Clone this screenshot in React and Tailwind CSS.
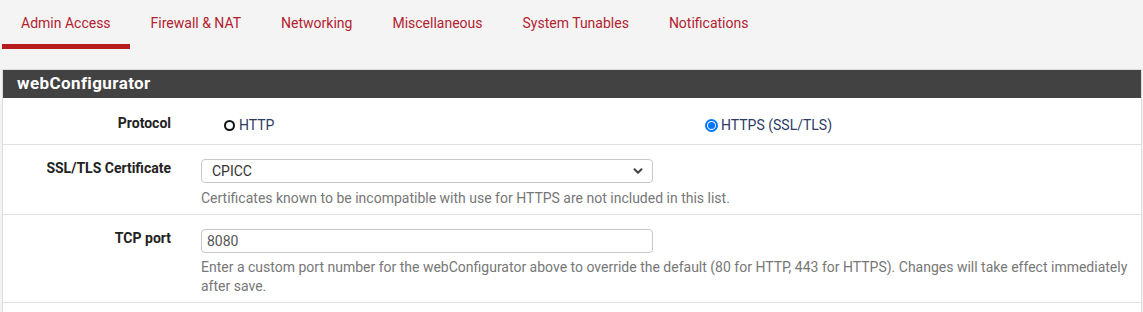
import { ChevronDown } from 'lucide-react'

const tabs = ['Admin Access', 'Firewall & NAT', 'Networking', 'Miscellaneous', 'System Tunables', 'Notifications']

function Radio({ checked, label }) {
  return (
    <label className="flex items-center gap-[3px] text-[14px] leading-5 text-[#2d3a63]">
      {checked ? (
        <span className="flex h-[13px] w-[13px] items-center justify-center rounded-full border-2 border-[#0075ff] bg-white">
          <span className="h-[7px] w-[7px] rounded-full bg-[#0075ff]"></span>
        </span>
      ) : (
        <span className="ml-[1px] mr-[1px] h-[11px] w-[11px] rounded-full border-[2.5px] border-[#111]"></span>
      )}
      {label}
    </label>
  )
}

export default function App() {
  return (
    <div className="min-h-screen bg-[#f4f4f4] font-['Roboto',sans-serif]">
      {/* Tabs */}
      <nav className="ml-[2px] flex gap-[2px]">
        {tabs.map((tab, i) => (
          <a
            key={tab}
            className={
              'px-[19px] pt-[13px] pb-[11px] text-[14px] leading-5 text-[#b3212f] ' +
              (i === 0 ? 'border-b-[5px] border-[#b71c1c]' : 'border-b-[5px] border-transparent')
            }
          >
            {tab}
          </a>
        ))}
      </nav>

      {/* Panel */}
      <div className="ml-[2px] mt-[20px] w-[1140px] border border-t-[#dcdcdc] border-x-[#dcdcdc] border-b-0 bg-white">
        <div className="bg-[#424242] px-[14px] h-[28px] flex items-center text-[17px] font-bold tracking-[0.4px] text-white">
          webConfigurator
        </div>

        {/* Protocol */}
        <div className="grid grid-cols-[198px_1fr] border-b border-[#e0e0e0]">
          <div className="pr-[30px] pt-[15px] pb-[11px] text-right text-[14px] font-bold leading-5 text-[#222]">Protocol</div>
          <div className="grid grid-cols-[482px_1fr] pt-[17px]">
            <div className="pl-[22px]">
              <Radio label="HTTP" />
            </div>
            <div className="pl-[22px]">
              <Radio checked label="HTTPS (SSL/TLS)" />
            </div>
          </div>
        </div>

        {/* Certificate */}
        <div className="grid grid-cols-[198px_1fr] border-b border-[#e0e0e0]">
          <div className="pr-[30px] pt-[13px] text-right text-[14px] font-bold leading-5 text-[#222]">SSL/TLS Certificate</div>
          <div className="pr-[4px] pt-[14px] pb-[6px]">
            <div className="flex h-[24px] w-[452px] items-center justify-between rounded-[4px] border border-[#c8c8c8] pl-[10px] pr-[7px] text-[14px] text-[#333]">
              <span>CPICC</span>
              <ChevronDown className="h-[14px] w-[14px] text-[#444]" strokeWidth={3.5} />
            </div>
            <p className="mt-[5px] text-[14px] leading-5 text-[#777]">
              Certificates known to be incompatible with use for HTTPS are not included in this list.
            </p>
          </div>
        </div>

        {/* TCP port */}
        <div className="grid grid-cols-[198px_1fr] border-b border-[#e0e0e0]">
          <div className="pr-[30px] pt-[13px] text-right text-[14px] font-bold leading-5 text-[#222]">TCP port</div>
          <div className="pr-[4px] pt-[14px] pb-[6px]">
            <div className="flex h-[24px] w-[452px] items-center rounded-[4px] border border-[#c8c8c8] px-[5px] text-[14px] text-[#555]">
              8080
            </div>
            <p className="mt-[5px] text-[14px] leading-[19px] text-[#777]">
              Enter a custom port number for the webConfigurator above to override the default (80 for HTTP, 443 for HTTPS). Changes will take effect immediately after save.
            </p>
          </div>
        </div>
        <div className="h-[20px]"></div>
      </div>
    </div>
  )
}
